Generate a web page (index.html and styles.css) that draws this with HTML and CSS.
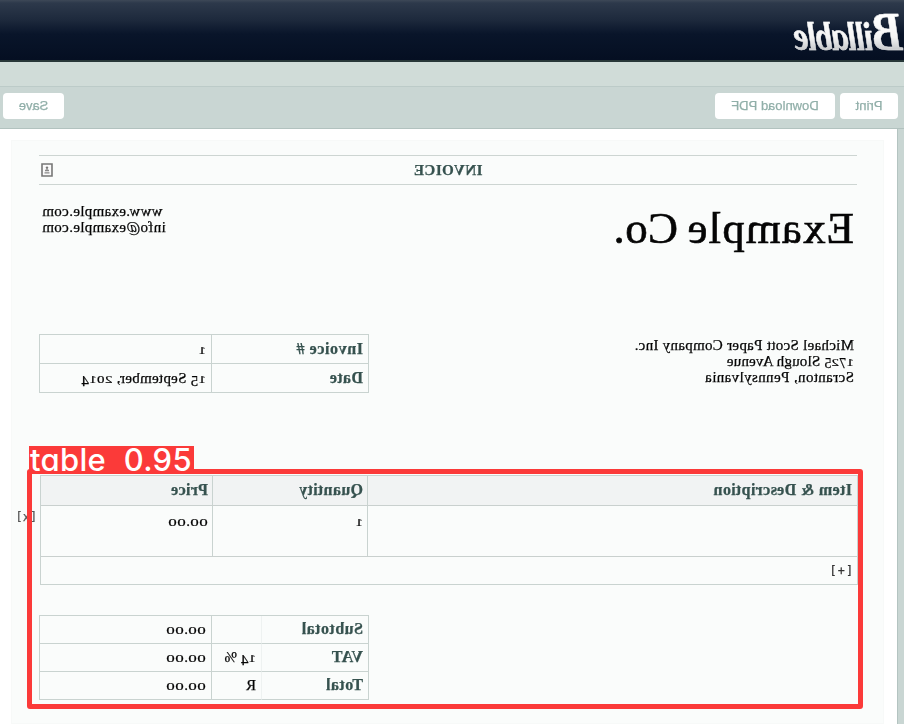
FILE: index.html
```html
<!DOCTYPE html>
<html lang="en">
<head>
<meta charset="utf-8">
<title>Billable</title>
<link rel="stylesheet" href="styles.css">
</head>
<body>
<div class="app">
  <header class="masthead"><span class="logo"><span class="logo-b">B</span>illable</span></header>
  <div class="strip"></div>
  <nav class="toolbar">
    <button class="btn print">Print</button>
    <button class="btn download">Download PDF</button>
    <button class="btn save">Save</button>
  </nav>
  <main class="paper">
    <section class="sheet">
      <div class="title-row">
        <h1>INVOICE</h1>
        <svg class="badge" width="12" height="14" viewBox="0 0 12 14"><path d="M1 1h10v12H1z" fill="#fafafa" stroke="#777" stroke-width="1.6"/><circle cx="6" cy="4.6" r="1.2" fill="#777"/><path d="M6 5v2.5M4 7.5h4M3.5 9.8h5" stroke="#888" stroke-width="1.3"/></svg>
      </div>
      <div class="company">
        <h2><span class="co-a">Example</span> <span class="co-b">Co.</span></h2>
        <p class="contact"><span class="www">www.example.com</span><br><span class="mail">info@example.com</span></p>
      </div>
      <div class="details">
        <p class="address"><span class="a1">Michael Scott Paper Company Inc.</span><br><span class="a2"><i class="x">1</i><i class="d">7</i><i class="x">2</i><i class="d">5</i> Slough Avenue</span><br><span class="a3">Scranton, Pennsylvania</span></p>
        <div class="grid meta">
          <b class="t-inv">Invoice #</b><span><i class="x">1</i></span>
          <b class="t-date">Date</b><span class="date"><i class="x">1</i><i class="d">5</i> September, <i class="x">2</i><i class="x">0</i><i class="x">1</i><i class="d">4</i></span>
        </div>
      </div>
      <div class="items">
        <div class="item-row head"><b class="t-item">Item &amp; Description</b><b class="t-qty">Quantity</b><b class="t-price">Price</b></div>
        <div class="item-row body"><span></span><span><i class="x">1</i></span><span><i class="x z">0</i><i class="x z">0</i>.<i class="x z">0</i><i class="x z">0</i></span></div>
        <div class="add">[+]</div>
        <span class="remove">[x]</span>
      </div>
      <div class="grid totals">
        <b class="t-sub">Subtotal</b><span></span><span><i class="x z">0</i><i class="x z">0</i>.<i class="x z">0</i><i class="x z">0</i></span>
        <b class="t-vat">VAT</b><span class="rate"><i class="x">1</i><i class="d">4</i><span class="pct">%</span></span><span><i class="x z">0</i><i class="x z">0</i>.<i class="x z">0</i><i class="x z">0</i></span>
        <b class="t-total">Total</b><span class="cur">R</span><span><i class="x z">0</i><i class="x z">0</i>.<i class="x z">0</i><i class="x z">0</i></span>
      </div>
    </section>
  </main>
</div>
<div class="detection"><span class="label">table 0.95</span></div>
</body>
</html>
```

FILE: styles.css
```css
* { box-sizing: border-box; }
body { margin: 0; width: 904px; height: 724px; overflow: hidden; position: relative; }
.app { width: 904px; height: 724px; overflow: hidden; transform: scaleX(-1); background: #c9d6d3; font: 15px/16px "Liberation Serif", serif; color: #050505; display: flex; flex-direction: column; }
h1, h2, p { margin: 0; font-weight: normal; }
.masthead { height: 62px; flex: none; background: linear-gradient(#3d4857 0, #2d394b 3px, #1d293c 20px, #09152a 34px, #050f22 59px); border-bottom: 2px solid #273738; padding: 7px 0 0 1px; }
.logo { display: inline-block; white-space: nowrap; font: italic bold 40px/50px "Liberation Serif", serif; letter-spacing: -1.5px; background: linear-gradient(#fff 20%, #f4f4f4 55%, #b9bcc0 85%); -webkit-background-clip: text; background-clip: text; color: transparent; padding-right: 5px; transform: scaleX(0.86); transform-origin: 0 50%; -webkit-text-stroke: 0.5px rgba(240, 240, 240, 0.6); }
.logo-b { font-size: 54px; }
.strip { height: 24px; flex: none; background: #d0dcd8; }
.toolbar { height: 43px; flex: none; background: #c9d6d3; border-top: 1px solid #bccbc8; border-bottom: 1px solid #b2c2bf; display: flex; gap: 5px; padding: 6px 3px 0 6px; }
.btn { height: 26px; border: 0; border-radius: 4px; background: #fff; color: #91afa9; font: 13px "Liberation Sans", sans-serif; padding: 0 0 2px; -webkit-text-stroke: 0.25px #91afa9; }
.print { width: 58px; }
.download { width: 120px; }
.save { width: 61px; margin-left: auto; }
.paper { flex: 1; margin-left: 6px; border-left: 1px solid #b4c4c1; background: #fff; padding: 11px 11px 0 13px; }
.sheet { height: 584px; background: #fafcfb; border: 1px solid #f7f9f8; padding: 14px 27px 0 26px; -webkit-text-stroke: 0.25px currentColor; }
.title-row { height: 30px; border-top: 1px solid #cdd5d2; border-bottom: 1px solid #cdd5d2; display: grid; grid-template-columns: 1fr auto 1fr; align-items: center; }
.title-row h1 { grid-column: 2; font: bold 15px/28px "Liberation Serif", serif; letter-spacing: 0.5px; color: #36524f; }
.badge { justify-self: end; margin-right: 2px; }
.company { height: 149px; display: flex; justify-content: space-between; padding: 18px 3px 0; }
.company h2 { font-size: 45px; line-height: 51px; -webkit-text-stroke: 0.6px currentColor; white-space: nowrap; }
.co-a { letter-spacing: 1.1px; }
.co-b { letter-spacing: 0.4px; margin-left: -3px; }
.contact { text-align: right; letter-spacing: 0.33px; }
.details { height: 141px; display: flex; justify-content: space-between; align-items: flex-start; }
.address { padding: 3px 0 0 3px; }
.a1 { letter-spacing: 0.29px; }
.a2 { letter-spacing: 0.2px; }
.a3 { letter-spacing: 0.38px; }
.grid { display: grid; width: 330px; border: 1px solid #c9d3d0; border-width: 1px 0 0 1px; }
.grid > * { border: 1px solid #c9d3d0; border-width: 0 1px 1px 0; padding: 0 5px; line-height: 27px; }
b { color: #36524f; font-size: 16px; letter-spacing: 0.35px; }
.t-inv { letter-spacing: 0.6px; }
.date { letter-spacing: 0.27px; }
.meta { grid-template-columns: 157px 1fr; grid-auto-rows: 29px; }
.meta > * { line-height: 28px; }
.totals { margin: 30px 0 0 auto; grid-template-columns: 107px 50px 1fr; grid-auto-rows: 28px; }
.totals > * { line-height: 26px; }
.totals > b { border-right-color: #eef2f1; }
.t-sub, .t-total { letter-spacing: 0.5px; }
.items { position: relative; width: 818px; border: 1px solid #c9d3d0; margin-left: -1px; }
.item-row { display: grid; grid-template-columns: 489px 155px 1fr; border-bottom: 1px solid #c9d0ce; }
.item-row > * { padding: 0 4px; border-left: 1px solid #c9d3d0; line-height: 30px; }
.item-row > :first-child { border-left: 0; padding-left: 5px; }
.head { height: 30px; background: #f1f3f3; }
.item-row > b { line-height: 28px; }
.body { height: 51px; }
.add { height: 27px; padding-left: 4px; font: 11.5px/28px "DejaVu Sans Mono", monospace; letter-spacing: 1.3px; color: #333; }
.remove { position: absolute; left: 820px; top: 29px; font: 11.5px/24px "DejaVu Sans Mono", monospace; letter-spacing: 0.3px; color: #555; }
i { font-style: normal; display: inline-block; line-height: 16px; }
.x { transform: scaleY(0.76); transform-origin: 50% 13px; }
.z { transform: scale(1.13, 0.76); width: 9px; text-align: center; }
.d { transform: translateY(3px); }
.a2 .d { font-size: 14px; line-height: 12px; transform: translateY(2px); }
.pct { margin-left: 4px; }
.detection { position: absolute; left: 27px; top: 469px; width: 836px; height: 240px; border: 5px solid #fb3a39; border-radius: 3px; }
.label { position: absolute; left: -3px; top: -28px; width: 165px; height: 27px; background: #fb3a39; color: #fff; font: 500 31px/27px Inter, sans-serif; font-feature-settings: "cv11"; white-space: pre; padding-left: 1px; letter-spacing: 0.3px; word-spacing: 9px; }
```
